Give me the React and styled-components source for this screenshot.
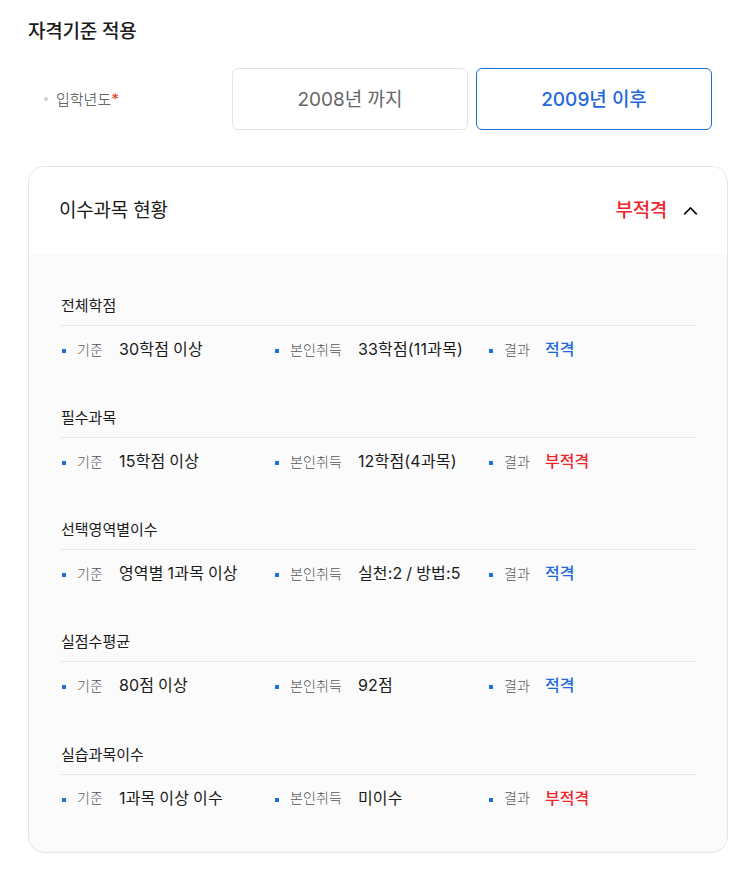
import React, { useState } from 'react';
import styled, { createGlobalStyle } from 'styled-components';

const GlobalStyle = createGlobalStyle`
  * {
    box-sizing: border-box;
  }
  body {
    margin: 0;
    background: #fff;
    color: #1a1a1a;
    font-family: Inter, 'Noto Sans CJK KR', sans-serif;
  }
  button {
    font-family: inherit;
    cursor: pointer;
  }
`;

const Page = styled.main`
  width: 755px;
  height: 875px;
  padding: 17px 27px 0 28px;
  overflow: hidden;
`;

const Title = styled.h2`
  margin: 0;
  height: 30px;
  line-height: 30px;
  font-size: 19px;
  font-weight: 500;
  letter-spacing: -0.2px;
  color: #1a1a1a;
`;

const YearRow = styled.div`
  display: flex;
  align-items: center;
  margin-top: 21px;
  padding-left: 16px;
`;

const YearLabel = styled.div`
  display: flex;
  align-items: center;
  width: 188px;
  font-size: 15px;
  line-height: 22px;
  font-weight: 300;
  letter-spacing: 0;
  color: #444;
  &::before {
    content: '';
    width: 4px;
    height: 4px;
    margin-right: 8px;
    border-radius: 50%;
    background: #d2d2d2;
  }
`;

const LabelText = styled.span`
  padding-top: 1px;
`;

const Required = styled.span`
  font-size: 16px;
  font-weight: 400;
  color: #e8432e;
`;

const YearButtons = styled.div`
  display: flex;
  gap: 8px;
`;

const YearButton = styled.button`
  width: 236px;
  height: 62px;
  padding: 0 0 3px;
  border: 1px solid ${(p) => (p.$active ? '#1e6fd0' : '#e4e4e4')};
  border-radius: 6px;
  background: #fff;
  color: ${(p) => (p.$active ? '#1f69da' : '#666')};
  font-size: 19px;
  font-weight: ${(p) => (p.$active ? 500 : 400)};
  letter-spacing: 0;
`;

const Card = styled.section`
  width: 700px;
  height: 687px;
  margin-top: 36px;
  border: 1px solid #e5e5e5;
  border-radius: 16px;
  overflow: hidden;
  background: #fbfbfb;
`;

const CardHeader = styled.div`
  display: flex;
  align-items: center;
  justify-content: space-between;
  height: 87px;
  padding: 0 29px 0 30px;
  background: #fff;
`;

const CardTitle = styled.h3`
  margin: 0;
  font-size: 19px;
  line-height: 28px;
  font-weight: 400;
  letter-spacing: -0.2px;
`;

const Toggle = styled.button`
  display: flex;
  align-items: center;
  gap: 16px;
  padding: 0;
  border: none;
  background: none;
  color: #f0252b;
  font-size: 19px;
  line-height: 28px;
  font-weight: 500;
  letter-spacing: -0.3px;
`;

const CardBody = styled.div`
  display: flex;
  flex-direction: column;
  gap: 42.15px;
  padding: 39px 32px 0;
`;

const SubjectTitle = styled.h4`
  margin: 0;
  height: 33px;
  line-height: 26px;
  border-bottom: 1px solid #e5e5e5;
  font-size: 15px;
  font-weight: 400;
  letter-spacing: 0;
`;

const Details = styled.dl`
  display: grid;
  grid-template-columns: 213px 214px 1fr;
  margin: 0;
  padding-top: 7px;
`;

const Detail = styled.div`
  display: flex;
  align-items: center;
  height: 30px;
  padding-left: 1px;
  white-space: nowrap;
  &::before {
    content: '';
    width: 4px;
    height: 4px;
    margin: 6px 11px 0 0;
    background: #2070d0;
  }
`;

const Term = styled.dt`
  padding-top: 1px;
  font-size: 14px;
  font-weight: 300;
  letter-spacing: 0.1px;
  color: #555;
`;

const Value = styled.dd`
  margin: 0 0 0 16px;
  padding-top: 2px;
  font-size: 16px;
  line-height: 24px;
  letter-spacing: 0.18px;
  word-spacing: -0.8px;
  font-weight: 400;
`;

const Result = styled(Value)`
  margin-left: 15px;
  font-weight: 500;
  letter-spacing: 0;
  color: ${(p) => (p.$pass ? '#2268dc' : '#f0252b')};
`;

const subjects = [
  { name: '전체학점', standard: '30학점 이상', earned: '33학점(11과목)', pass: true },
  { name: '필수과목', standard: '15학점 이상', earned: '12학점(4과목)', pass: false },
  { name: '선택영역별이수', standard: '영역별 1과목 이상', earned: '실천:2 / 방법:5', pass: true },
  { name: '실점수평균', standard: '80점 이상', earned: '92점', pass: true },
  { name: '실습과목이수', standard: '1과목 이상 이수', earned: '미이수', pass: false },
];

const years = ['2008년 까지', '2009년 이후'];

const ChevronUp = () => (
  <svg width="15" height="9" viewBox="0 0 15 9" fill="none" stroke="#111" strokeWidth="1.7">
    <path d="M1.2 8.4 L7.5 2 L13.8 8.4" />
  </svg>
);

const App = () => {
  const [year, setYear] = useState(years[1]);
  const [open, setOpen] = useState(true);

  return (
    <Page>
      <GlobalStyle />
      <Title>자격기준 적용</Title>
      <YearRow>
        <YearLabel>
          <LabelText>
            입학년도<Required>*</Required>
          </LabelText>
        </YearLabel>
        <YearButtons>
          {years.map((item) => (
            <YearButton key={item} $active={item === year} onClick={() => setYear(item)}>
              {item}
            </YearButton>
          ))}
        </YearButtons>
      </YearRow>
      <Card>
        <CardHeader>
          <CardTitle>이수과목 현황</CardTitle>
          <Toggle onClick={() => setOpen(!open)}>
            부적격
            <ChevronUp />
          </Toggle>
        </CardHeader>
        {open && (
          <CardBody>
            {subjects.map((subject) => (
              <div key={subject.name}>
                <SubjectTitle>{subject.name}</SubjectTitle>
                <Details>
                  <Detail>
                    <Term>기준</Term>
                    <Value>{subject.standard}</Value>
                  </Detail>
                  <Detail>
                    <Term>본인취득</Term>
                    <Value>{subject.earned}</Value>
                  </Detail>
                  <Detail>
                    <Term>결과</Term>
                    <Result $pass={subject.pass}>{subject.pass ? '적격' : '부적격'}</Result>
                  </Detail>
                </Details>
              </div>
            ))}
          </CardBody>
        )}
      </Card>
    </Page>
  );
};

export default App;
